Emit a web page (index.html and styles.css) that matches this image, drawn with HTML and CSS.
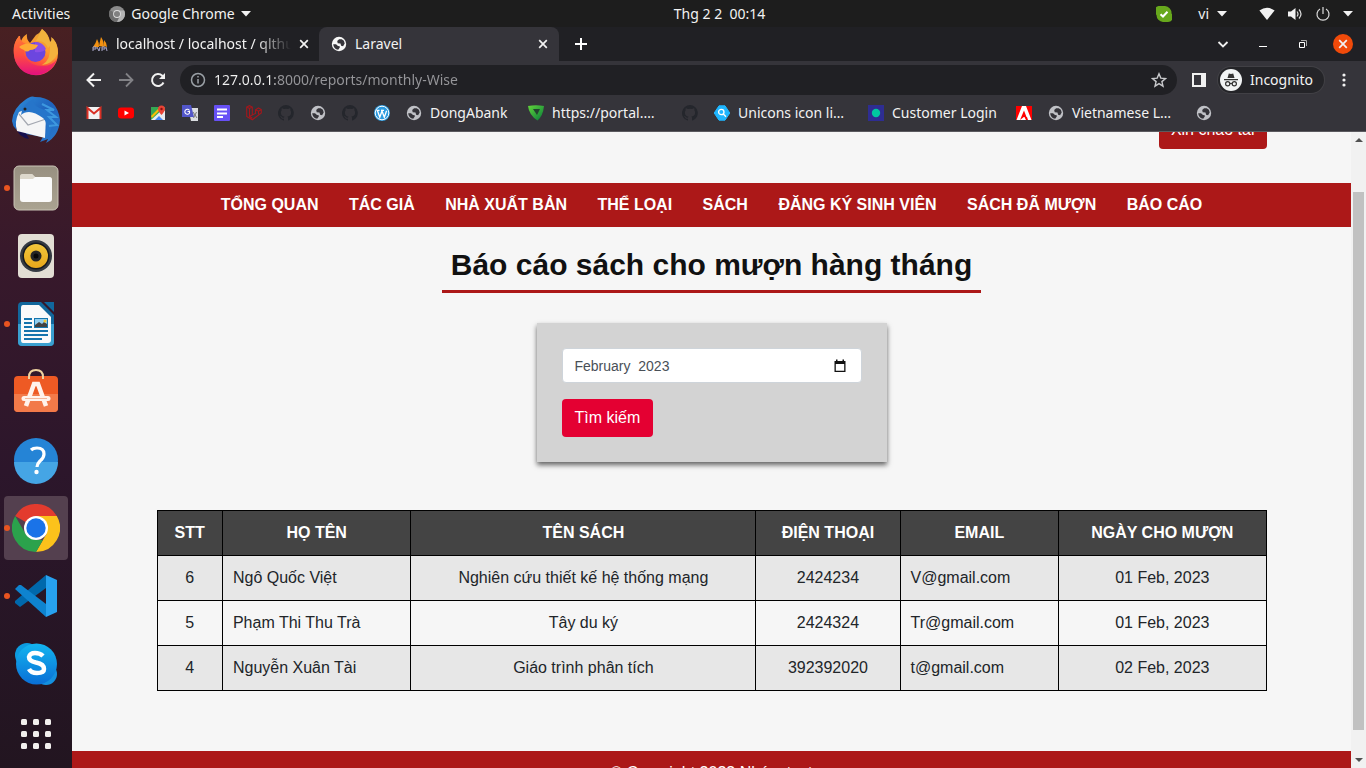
FILE: index.html
```html
<!DOCTYPE html>
<html lang="vi">
<head>
<meta charset="utf-8">
<title>Laravel</title>
<meta name="viewport" content="width=device-width, initial-scale=1">
<link rel="stylesheet" href="styles.css">
</head>
<body>
<svg class="defs" aria-hidden="true">
  <defs>
    <linearGradient id="fx" x1="0.8" y1="0" x2="0.3" y2="1"><stop offset="0" stop-color="#d9a83a"/><stop offset=".4" stop-color="#ff9a2e"/><stop offset=".7" stop-color="#ff4f3c"/><stop offset="1" stop-color="#e5137c"/></linearGradient>
    <linearGradient id="fxr" x1="0" y1="0" x2="0" y2="1"><stop offset="0" stop-color="#ff7a34"/><stop offset=".5" stop-color="#ff4b42"/><stop offset="1" stop-color="#e3107f"/></linearGradient>
    <linearGradient id="tb" x1="0" y1="0" x2="1" y2="1"><stop offset="0" stop-color="#2f8fdc"/><stop offset=".5" stop-color="#1f63bd"/><stop offset="1" stop-color="#2b7ccf"/></linearGradient>
    <linearGradient id="files" x1="0" y1="0" x2="0" y2="1"><stop offset="0" stop-color="#989081"/><stop offset="1" stop-color="#aaa391"/></linearGradient>
    <linearGradient id="cone" x1="0" y1="0" x2="0" y2="1"><stop offset="0" stop-color="#f0c63c"/><stop offset="1" stop-color="#e8a81b"/></linearGradient>
    <linearGradient id="skype" x1="0" y1="0" x2="0" y2="1"><stop offset="0" stop-color="#13b5ef"/><stop offset="1" stop-color="#0a6fd6"/></linearGradient>
    <linearGradient id="portal" x1="0" y1="0" x2="1" y2="1"><stop offset="0" stop-color="#63d63b"/><stop offset="1" stop-color="#067a3a"/></linearGradient>
  </defs>
  <symbol id="globe" viewBox="0 0 16 16"><circle cx="8" cy="8" r="7.2" fill="currentColor"/><path class="land" d="M2.2 8.2 5 8.3l2 1.8 1.7.2.1 1.2-1.6 2.2c-2.9-.4-4.9-2.6-5-5.5zM6.2 5l1.9-1.8h2.6l2.2 1.6.8 2.8-1.6 2.6-2-.5-.6-2.1-2.8-.3z"/></symbol>
  <symbol id="github" viewBox="0 0 16 16"><path fill="currentColor" d="M8 0a8 8 0 0 0-2.5 15.600c.4.1.5-.2.5-.4v-1.500c-2.200.5-2.700-1-2.700-1-.4-.9-.9-1.200-.9-1.200-.7-.5.1-.5.1-.5.8.1 1.200.8 1.200.8.7 1.300 1.900.9 2.300.7.1-.5.3-.9.5-1.100-1.800-.2-3.600-.9-3.600-4 0-.9.3-1.600.8-2.100-.1-.2-.4-1 .1-2.100 0 0 .7-.2 2.200.8a7.500 7.500 0 0 1 4 0c1.500-1 2.200-.8 2.200-.8.4 1.100.2 1.900.1 2.100.5.6.8 1.300.8 2.100 0 3.100-1.900 3.700-3.700 3.900.3.300.6.8.6 1.500v2.300c0 .2.100.5.600.4A8 8 0 0 0 8 0z"/></symbol>
  <symbol id="cross" viewBox="0 0 10 10"><path d="M1.200 1.200l7.600 7.600M8.800 1.200 1.200 8.800" stroke="currentColor" stroke-width="1.700"/></symbol>
  <symbol id="caret" viewBox="0 0 10 6"><path d="M0 0h10L5 5.500z" fill="currentColor"/></symbol>
</svg>

<header class="topbar">
  <div class="topbar-side">
    <button class="top-btn">Activities</button>
    <button class="top-btn top-app">
      <svg class="i16" viewBox="0 0 16 16"><circle cx="8" cy="8" r="8" fill="#8b8b8b"/><path d="M8 8 1 4.200A8 8 0 0 0 8 16l3-6z" fill="#6e6e6e"/><path d="M8 4.500h7.200A8 8 0 0 1 8 16l3.200-6.500z" fill="#b4b4b4"/><circle cx="8" cy="8" r="3.900" fill="#ddd"/><circle cx="8" cy="8" r="3" fill="#808080"/></svg>
      <span>Google Chrome</span>
      <svg class="caret"><use href="#caret"/></svg>
    </button>
  </div>
  <button class="top-btn clock">Thg 2 2&nbsp; 00:14</button>
  <div class="topbar-side topbar-end">
    <svg class="i16 skype-ok" viewBox="0 0 16 16"><path d="M4 0h5a7 7 0 0 1 6.500 7.500A5 5 0 0 1 12 16H7A7 7 0 0 1 .5 9 5 5 0 0 1 4 0z" fill="#67a81c"/><path d="M4.500 8.200 7 10.500l4.500-4.700" fill="none" stroke="#fff" stroke-width="2"/></svg>
    <button class="top-btn lang"><span>vi</span><svg class="caret"><use href="#caret"/></svg></button>
    <button class="top-btn tray" aria-label="Hệ thống">
      <svg class="i16" viewBox="0 0 16 16"><path d="M.4 4.600Q8-1.200 15.600 4.600L8 14z" fill="#f2f2f2"/></svg>
      <svg class="i16" viewBox="0 0 16 16"><path d="M1 5.500h3L8.500 2v12L4 10.500H1z" fill="#f2f2f2"/><path d="M10 5.500q2 2.500 0 5M12 3.500q4 4.500 0 9" fill="none" stroke="#ddd" stroke-width="1.200"/></svg>
      <svg class="i16" viewBox="0 0 16 16"><path d="M5 3a6 6 0 1 0 6 0M8 1v7" fill="none" stroke="#ddd" stroke-width="1.200"/></svg>
      <svg class="caret"><use href="#caret"/></svg>
    </button>
  </div>
</header>

<div class="desktop">
  <nav class="dock" aria-label="Dock">
    <button class="tile" aria-label="Firefox"><svg class="i48" viewBox="0 0 48 48"><path d="M24 7q4-2 6-6 7 5 8 13 3-1 2-4 7 7 6 15.500A22 22 0 0 1 2 25Q1 15 7 8q0 4 2 5 2-5 6-7-1 5 3 9z" fill="url(#fx)"/><path d="M7 8q-7 9-5 19a22 22 0 0 0 43 4q-5 7-14 7-13 0-18-9-3-8 1-13-6-2-6-8z" fill="url(#fxr)"/><circle cx="23.500" cy="24" r="10" fill="#6c46df"/><path d="M23 14q8 0 11 7-4 4-11 3z" fill="#8a4fe8"/><path d="M7 19q6-5 13-3l6 1q-2 5-8 5-3 3-6 0-3-1-5-3z" fill="#ffab34"/><path d="M24 13q9-1 12 7l2-2q1 14-8 19 11-1 16-12-1-13-7-16 1 4-1 5-2-8-8-13-3 6-6 12z" fill="#f2b23d"/></svg></button>
    <button class="tile" aria-label="Thunderbird"><svg class="i48" viewBox="0 0 48 48"><path d="M13 4q6-5 10-3 22 0 25 23-1 16-14 23l2-4-8 3 3-5-17-3Q1 35 0 25 1 12 13 4z" fill="url(#tb)"/><path d="M4 31q2 10 13 12l-3-6z" fill="#17104f"/><path d="M7 16 17 12l17 9-1 21L5 35q-3-9 2-19z" fill="#f5f5f6"/><path d="m7 18 9 11 18-6" fill="none" stroke="#a4a8b1" stroke-width="1.200"/><path d="M9 19q1-11 13-16-3 7 11 11 11 5 7 17-2 9-7 12 4-16-2-21-8-6-14-6-5 0-8 3z" fill="#2675ca"/><path d="m30 8 12 6-7 0 9 7-7 0 8 8-8 1" fill="none" stroke="#3d98df" stroke-width="2"/><circle cx="13" cy="13" r="1.500" fill="#222"/></svg></button>
    <button class="tile running" aria-label="Tệp tin"><svg class="i48" viewBox="0 0 48 48"><rect x="2" y="2" width="44" height="44" rx="5" fill="url(#files)" stroke="#c9c3b5"/><path d="M8 13q0-3 3-3h9l3 3h14q3 0 3 3v10H8z" fill="#ddd8cc"/><rect x="8" y="13" width="32" height="25" rx="3" fill="#fafafa"/><path d="M8 15v-2q0-3 3-3h9l3 3-2 2z" fill="#ddd8cc"/></svg></button>
    <button class="tile" aria-label="Rhythmbox"><svg class="i48" viewBox="0 0 48 48"><rect x="6" y="2" width="36" height="44" rx="4" fill="#e2ded4"/><circle cx="24" cy="24" r="16" fill="#343a42"/><circle cx="24" cy="24" r="13.500" fill="#15191e"/><circle cx="24" cy="24" r="12" fill="url(#cone)"/><circle cx="24" cy="24" r="5.500" fill="#262626"/><circle cx="24" cy="24" r="2.500" fill="#080808"/></svg></button>
    <button class="tile running" aria-label="LibreOffice Writer"><svg class="i48" viewBox="0 0 48 48"><path d="M10 2h19l13 13v27q0 4-4 4H10q-4 0-4-4V6q0-4 4-4z" fill="#12679c"/><path d="M6 24h36v18q0 4-4 4H10q-4 0-4-4z" fill="#3aa0d0"/><path d="M32 2h10v10z" fill="#11679e"/><path d="M11 5h16l12 12v23q0 3-3 3H11q-2 0-2-3V8q0-3 2-3z" fill="#fafafa"/><path d="M12 19h8M12 23h8M12 27h8M12 31h24M12 35h24M12 39h18" stroke="#1674ad" stroke-width="2"/><rect x="22" y="18" width="14" height="10" fill="#1576ae"/><path d="M23 19h12v8H23z" fill="#92cff0"/><path d="m23 25 4-3 3 2 2-2 3 2v3H23z" fill="#424242"/><circle cx="33" cy="21" r="1.500" fill="#f3c62f"/></svg></button>
    <button class="tile" aria-label="Ubuntu Software"><svg class="i48" viewBox="0 0 48 48"><rect x="2" y="8" width="44" height="36" rx="4" fill="#ee5a24"/><path d="M2 26h44v14q0 4-4 4H6q-4 0-4-4z" fill="#f27a49"/><path d="M17 11V9q0-7 7-7t7 7v2" fill="none" stroke="#efd3a0" stroke-width="2"/><path d="m14 38 8-22h4l8 22" fill="none" stroke="#fff3ec" stroke-width="4.500"/><path d="M12 30.500h24" stroke="#fff3ec" stroke-width="5" stroke-linecap="round"/><path d="M13 30.500h22" stroke="#f3b79b"/></svg></button>
    <button class="tile" aria-label="Trợ giúp"><svg class="i48" viewBox="0 0 48 48"><circle cx="24" cy="24" r="22" fill="#2584d6"/><path d="M2 26h44a22 22 0 0 1-44 0z" fill="#45a5e5"/><path d="M19 14q2-2 6-2 7 0 7 6 0 4-4 7-3 3-3 6" fill="none" stroke="#fff" stroke-width="3.200"/><circle cx="24.500" cy="36" r="2.200" fill="#fff"/></svg></button>
    <button class="tile running active" aria-label="Google Chrome"><svg class="i48" viewBox="0 0 48 48"><path d="M24 24 3.200 12A24 24 0 0 1 44.800 12z" fill="#e33b2e"/><path d="M24 12h20.800A24 24 0 0 1 24 48l10.400-18z" fill="#fcc21b"/><path d="M3.200 12 13.600 30 24 36h6.900L24 48A24 24 0 0 1 3.200 12z" fill="#2ba24c"/><circle cx="24" cy="24" r="12" fill="#fff"/><circle cx="24" cy="24" r="9.700" fill="#1a73e8"/></svg></button>
    <button class="tile running" aria-label="Visual Studio Code"><svg class="i48" viewBox="0 0 48 48"><path d="M34 3v13L8 35l-5-4v-2z" fill="#0068ac"/><path d="m3 17 4-4h2l25 19v13z" fill="#0e83cf"/><path d="m34 3 11 5v32l-11 5z" fill="#27a1ef"/></svg></button>
    <button class="tile" aria-label="Skype"><svg class="i48" viewBox="0 0 48 48"><circle cx="15" cy="15" r="12" fill="#0c9be0"/><circle cx="34" cy="34" r="11" fill="#1490df"/><circle cx="24.500" cy="24" r="20.500" fill="url(#skype)"/><path d="M31 16q-3-3-8-3t-6 4q0 4 7 5.500 8 1.500 8 6.500 0 4-7 4-6 0-8-4" fill="none" stroke="#fff" stroke-width="4.500"/></svg></button>
    <button class="tile apps" aria-label="Ứng dụng"><svg class="i48" viewBox="0 0 48 48" fill="#f2f0ee"><rect x="9" y="9" width="6" height="6" rx="1.500"/><rect x="21" y="9" width="6" height="6" rx="1.500"/><rect x="33" y="9" width="6" height="6" rx="1.500"/><rect x="9" y="21" width="6" height="6" rx="1.500"/><rect x="21" y="21" width="6" height="6" rx="1.500"/><rect x="33" y="21" width="6" height="6" rx="1.500"/><rect x="9" y="33" width="6" height="6" rx="1.500"/><rect x="21" y="33" width="6" height="6" rx="1.500"/><rect x="33" y="33" width="6" height="6" rx="1.500"/></svg></button>
  </nav>

  <div class="browser">
    <div class="tabstrip">
      <div class="tab">
        <svg class="i16" viewBox="0 0 16 16"><path d="M1 11Q4 7 5 3q2 3 2 8zM7 10q1-5 2-9 3 4 3 10zM12 10V4q3 3 3 7z" fill="#f29111"/><path d="M1 15v-4h3v2H1m4-2 2 4 1-4m2 4v-4h3v2h-3m4-2 1 4" fill="none" stroke="#a9a6c9"/></svg>
        <span class="tab-title faded">localhost / localhost / qlthuvien</span>
        <button class="tab-close" aria-label="Đóng"><svg class="i10"><use href="#cross"/></svg></button>
      </div>
      <div class="tab tab-active">
        <svg class="i16 globe-light"><use href="#globe"/></svg>
        <span class="tab-title">Laravel</span>
        <button class="tab-close" aria-label="Đóng"><svg class="i10"><use href="#cross"/></svg></button>
      </div>
      <button class="new-tab" aria-label="Thẻ mới"><svg class="i12" viewBox="0 0 12 12"><path d="M6 0v12M0 6h12" stroke="#fff" stroke-width="2"/></svg></button>
      <div class="win-controls">
        <button aria-label="Tìm thẻ"><svg class="i12" viewBox="0 0 12 12"><path d="m1.500 4 4.500 4.500L10.500 4" fill="none" stroke="#eee" stroke-width="1.800"/></svg></button>
        <button aria-label="Thu nhỏ"><svg class="i12" viewBox="0 0 12 12"><path d="M2 8.500h8" stroke="#fff"/></svg></button>
        <button aria-label="Khôi phục"><svg class="i12" viewBox="0 0 12 12"><path d="M2.500 4.500h5v5h-5z" fill="none" stroke="#fff"/><path d="M4 2.500h5.500V8" fill="none" stroke="#aaa"/></svg></button>
        <button class="win-close" aria-label="Đóng cửa sổ"><svg class="i10"><use href="#cross"/></svg></button>
      </div>
    </div>

    <div class="toolbar">
      <button class="tool" aria-label="Quay lại"><svg class="i16" viewBox="0 0 16 16"><path d="M15 8H2M8 1.500 1.500 8 8 14.500" fill="none" stroke="#f1f1f1" stroke-width="2"/></svg></button>
      <button class="tool" aria-label="Tiến"><svg class="i16" viewBox="0 0 16 16"><path d="M1 8h13M8 1.500 14.500 8 8 14.500" fill="none" stroke="#828286" stroke-width="1.800"/></svg></button>
      <button class="tool" aria-label="Tải lại"><svg class="i16" viewBox="0 0 16 16"><path d="M13.500 10.500A6 6 0 1 1 12.300 3.800L14 5.500" fill="none" stroke="#f1f1f1" stroke-width="2"/><path d="M15 1v6H9z" fill="#f1f1f1"/></svg></button>
      <div class="omnibox">
        <svg class="i16" viewBox="0 0 16 16" fill="none" stroke="#9aa0a6" stroke-width="1.500"><circle cx="8" cy="8" r="6.500"/><path d="M8 7v4.500M8 4v1.600"/></svg>
        <input class="url" type="text" aria-label="Địa chỉ" value="127.0.0.1:8000/reports/monthly-Wise">
        <button aria-label="Dấu trang"><svg class="i16" viewBox="0 0 16 16"><path d="m8 1.800 1.800 4.300 4.700.4-3.600 3.100 1.100 4.600L8 11.700l-4 2.500 1.100-4.600L1.500 6.500l4.700-.4z" fill="none" stroke="#c9cacd" stroke-width="1.400"/></svg></button>
      </div>
      <button class="panel" aria-label="Bảng bên"><svg class="i16" viewBox="0 0 16 16"><path fill-rule="evenodd" d="M1 1h14v14H1zM3 3v10h7V3z" fill="#f1f1f1"/></svg></button>
      <button class="incognito">
        <svg class="i22" viewBox="0 0 22 22"><circle cx="11" cy="11" r="11" fill="#f1f3f4"/><path d="m7.500 9 1.300-4.500 2.200.5 2.200-.5L14.500 9zM4 10h14v1.300H4z" fill="#333"/><g fill="none" stroke="#333" stroke-width="1.200"><circle cx="7.700" cy="14.800" r="2.100"/><circle cx="14.300" cy="14.800" r="2.100"/><path d="M9.800 14.500h2.400"/></g></svg>
        <span>Incognito</span>
      </button>
      <button class="menu" aria-label="Menu"><svg class="i16" viewBox="0 0 16 16" fill="#f1f1f1"><circle cx="8" cy="3" r="1.600"/><circle cx="8" cy="8" r="1.600"/><circle cx="8" cy="13" r="1.600"/></svg></button>
    </div>

    <nav class="bookmarks" aria-label="Dấu trang">
      <a href="#" aria-label="Gmail"><svg class="i16" viewBox="0 0 16 16"><path d="M1 2h14v12H1z" fill="#f2f2f2"/><path d="M1.500 14V3L8 8.500 14.500 3v11" fill="none" stroke="#d93025" stroke-width="2"/></svg></a>
      <a href="#" aria-label="YouTube"><svg class="i16" viewBox="0 0 16 16"><rect y="2.500" width="16" height="11" rx="3" fill="#f00"/><path d="m6.500 5.500 4.500 2.500-4.500 2.500z" fill="#fff"/></svg></a>
      <a href="#" aria-label="Maps"><svg class="i16" viewBox="0 0 16 16"><path d="M1 2h14v13H1z" fill="#34a853"/><path d="M1 15 13 4l2 2v9z" fill="#e8eaed"/><path d="M1 11 10 2h3L2 13z" fill="#fbbc04"/><path d="m5 15 4-4 4 4z" fill="#4285f4"/><path d="M11.500 10Q8 6 8 4a3.500 3.500 0 0 1 7 0q0 2-3.500 6z" fill="#ea4335"/><circle cx="11.500" cy="4" r="1.200" fill="#811"/></svg></a>
      <a href="#" aria-label="Translate"><svg class="i16" viewBox="0 0 16 16"><path d="M6 3h10v13H9z" fill="#dadce0"/><path d="M0 0h9l3 12H0z" fill="#5256c9"/><path d="M7.500 5.500A2.500 2.500 0 1 0 7.500 8V6.500H5.500" fill="none" stroke="#fff" stroke-width="1.100"/><path d="m11 7 4 6m-.5-6-3 6" stroke="#777"/></svg></a>
      <a href="#" aria-label="Forms"><svg class="i16" viewBox="0 0 16 16"><rect width="16" height="16" rx="1" fill="#6750f5"/><path d="M3 4.500h10M3 8.500h10M3 12h6" stroke="#fff" stroke-width="2"/></svg></a>
      <a href="#" aria-label="Laravel"><svg class="i16" viewBox="0 0 16 16"><path d="m.7 2 2.800-1.300L6.300 2v8l3.200-1.500V4.700L12.500 3l2.800 1.500V8L6.300 14.800.7 11.500zm0 0 2.800 1.500L6.300 2M3.500 3.500v8l2.800-1.500M9.500 4.700l3 1.500 2.800-1.500M12.500 6.200v3M3.500 11.500l2.800 1.700" fill="none" stroke="#a3171c" stroke-width="1.100"/></svg></a>
      <a href="#" aria-label="GitHub"><svg class="i16 dark"><use href="#github"/></svg></a>
      <a href="#" aria-label="Web"><svg class="i16 globe-grey"><use href="#globe"/></svg></a>
      <a href="#" aria-label="GitHub"><svg class="i16 dark"><use href="#github"/></svg></a>
      <a href="#" aria-label="WordPress"><svg class="i16" viewBox="0 0 16 16"><circle cx="8" cy="8" r="8" fill="#2b9be0"/><circle cx="8" cy="8" r="6.800" fill="none" stroke="#fff" stroke-width="1"/><path d="m3.300 5.300 2.500 7L8 6l2.300 6.300 2.300-6.500M2.500 5.300h3M7 5.300h3" fill="none" stroke="#fff" stroke-width="1.300"/></svg></a>
      <a href="#"><svg class="i16 globe-grey"><use href="#globe"/></svg><span class="mark mark-s">DongAbank</span></a>
      <a href="#"><svg class="i16" viewBox="0 0 16 16"><path d="M0 1q8-1.500 16 0-1 10-6.500 14.500Q1 10 0 1z" fill="url(#portal)"/><path d="M5 4h7L9 10z" fill="#23442f"/></svg><span class="mark mark-l">https://portal.…</span></a>
      <a href="#" aria-label="GitHub"><svg class="i16 dark"><use href="#github"/></svg></a>
      <a href="#"><svg class="i16" viewBox="0 0 16 16"><path d="M5 .8h6l4.800 7.200L11 15.200H5L.2 8z" fill="#1fb6ff" stroke="#1fb6ff" stroke-linejoin="round"/><circle cx="7.300" cy="7" r="2.700" fill="none" stroke="#fff" stroke-width="1.300"/><path d="m9.300 9 2.700 2.700" stroke="#fff" stroke-width="1.300"/></svg><span class="mark mark-l">Unicons icon li…</span></a>
      <a href="#"><svg class="i16" viewBox="0 0 16 16"><path d="M0 0h16v16H0z" fill="#2e2d92"/><circle cx="8" cy="8" r="4.200" fill="#00c8a0"/></svg><span class="mark mark-m">Customer Login</span></a>
      <a href="#" aria-label="Adobe"><svg class="i16" viewBox="0 0 16 16"><path d="M0 1h16v14H0z" fill="#f00"/><path d="M6 1h4l5.500 14H12l-1-3H8.500L10 15H.5z" fill="#fff"/><path d="m8 5.500 2.500 6.500H7.800L4 15z" fill="#f00"/></svg></a>
      <a href="#"><svg class="i16 globe-grey"><use href="#globe"/></svg><span class="mark mark-m">Vietnamese L…</span></a>
      <a href="#" aria-label="Web"><svg class="i16 globe-grey"><use href="#globe"/></svg></a>
    </nav>

    <div class="viewport">
      <div class="page">
        <div class="page-head container"><button class="btn btn-user">Xin chào tài</button></div>
        <nav class="site-nav">
          <a href="#">TỔNG QUAN</a>
          <a href="#">TÁC GIẢ</a>
          <a href="#">NHÀ XUẤT BẢN</a>
          <a href="#">THỂ LOẠI</a>
          <a href="#">SÁCH</a>
          <a href="#">ĐĂNG KÝ SINH VIÊN</a>
          <a href="#">SÁCH ĐÃ MƯỢN</a>
          <a href="#">BÁO CÁO</a>
        </nav>
        <main class="container content">
          <h1 class="title">Báo cáo sách cho mượn hàng tháng</h1>
          <form class="search">
            <div class="month">
              <input type="text" value="February  2023" aria-label="Tháng">
              <button type="button" aria-label="Chọn tháng"><svg class="i16" viewBox="0 0 16 16"><path fill-rule="evenodd" d="M2.500 3H4V1.500h1.500V3h5V1.500H12V3h1.500v11h-11zM3.800 6v6.700h8.400V6z" fill="#111"/></svg></button>
            </div>
            <button class="btn btn-search" type="button">Tìm kiếm</button>
          </form>
          <table class="loans">
            <colgroup><col class="c-no"><col class="c-name"><col class="c-book"><col class="c-phone"><col class="c-mail"><col class="c-date"></colgroup>
            <thead><tr><th>STT</th><th>HỌ TÊN</th><th>TÊN SÁCH</th><th>ĐIỆN THOẠI</th><th>EMAIL</th><th>NGÀY CHO MƯỢN</th></tr></thead>
            <tbody>
              <tr><td>6</td><td class="left">Ngô Quốc Việt</td><td>Nghiên cứu thiết kế hệ thống mạng</td><td>2424234</td><td class="left">V@gmail.com</td><td>01 Feb, 2023</td></tr>
              <tr><td>5</td><td class="left">Phạm Thi Thu Trà</td><td>Tây du ký</td><td>2424324</td><td class="left">Tr@gmail.com</td><td>01 Feb, 2023</td></tr>
              <tr><td>4</td><td class="left">Nguyễn Xuân Tài</td><td>Giáo trình phân tích</td><td>392392020</td><td class="left">t@gmail.com</td><td>02 Feb, 2023</td></tr>
            </tbody>
          </table>
        </main>
        <footer class="footer">© Copyright 2023 Nhóm test</footer>
      </div>
      <div class="scrollbar" aria-hidden="true">
        <svg class="arrow" viewBox="0 0 8 4"><path d="M4 0l4 4H0z" fill="#505050"/></svg>
        <div class="track"><div class="thumb"></div></div>
        <svg class="arrow" viewBox="0 0 8 4"><path d="M0 0h8L4 4z" fill="#505050"/></svg>
      </div>
    </div>
  </div>
</div>
</body>
</html>
```
FILE: styles.css
```css
* { box-sizing: border-box; }

body {
  margin: 0;
  height: 100vh;
  display: flex;
  flex-direction: column;
  overflow: hidden;
  font: 14px/20px "Noto Sans", sans-serif;
  color: #f2f2f2;
  background: #1d1d1d;
}

button {
  margin: 0;
  padding: 0;
  border: 0;
  background: none;
  color: inherit;
  font: inherit;
  display: flex;
  align-items: center;
}

a { color: inherit; text-decoration: none; }
svg { display: block; flex: none; }
.defs { position: absolute; width: 0; height: 0; }
.i10 { width: 10px; height: 10px; }
.i12 { width: 12px; height: 12px; }
.i16 { width: 16px; height: 16px; }
.i22 { width: 22px; height: 22px; }
.i48 { width: 48px; height: 48px; }
.caret { width: 10px; height: 6px; }

/* System bar */
.topbar {
  flex: none;
  height: 27px;
  display: flex;
  align-items: center;
  justify-content: space-between;
  padding: 0 13px 0 12px;
}
.topbar-side { flex: 1; display: flex; align-items: center; }
.topbar-end { justify-content: flex-end; }
.top-app { gap: 6px; margin-left: 39px; }
.clock { padding-left: 74px; }
.skype-ok { margin-right: 26px; }
.lang { gap: 8px; margin-right: 32px; }
.tray { gap: 12px; }

.desktop { flex: 1; min-height: 0; display: flex; }

/* Dock */
.dock {
  flex: none;
  width: 72px;
  display: flex;
  flex-direction: column;
  justify-content: flex-end;
  align-items: center;
  gap: 4px;
  padding-bottom: 2px;
  overflow: hidden;
  background: linear-gradient(#482022, #38192b 30%, #2c162b 60%, #221520);
}
.tile {
  position: relative;
  flex: none;
  width: 64px;
  height: 64px;
  justify-content: center;
  border-radius: 4px;
}
.tile.active { background: #54404f; }
.tile.running::before {
  content: "";
  position: absolute;
  left: 0;
  width: 6px;
  height: 6px;
  border-radius: 50%;
  background: #e95420;
}
.apps { margin-top: 2px; }

/* Browser frame */
.browser { flex: 1; min-width: 0; display: flex; flex-direction: column; background: #35343a; }
.tabstrip { flex: none; height: 34px; display: flex; background: #202024; }
.tab {
  width: 247px;
  display: flex;
  align-items: center;
  gap: 8px;
  padding: 0 10px 0 20px;
}
.tab-active { width: 240px; padding: 0 11px 0 12px; border-radius: 8px 8px 0 0; background: #35343a; }
.tab-title { flex: 1; min-width: 0; overflow: hidden; white-space: nowrap; }
.faded { -webkit-mask-image: linear-gradient(90deg, #000 80%, transparent); mask-image: linear-gradient(90deg, #000 80%, transparent); }
.new-tab { padding: 0 16px; }
.win-controls { margin-left: auto; display: flex; align-items: center; gap: 20px; padding-right: 13px; }
.win-controls button { width: 20px; height: 20px; justify-content: center; }
.win-close { border-radius: 50%; background: #f04a0a; }
.globe-light { color: #f8f8f8; fill: #35343a; }
.globe-grey { color: #c0c1c6; fill: #35343a; }
.dark { color: #24262c; }

.toolbar { flex: none; height: 38px; display: flex; align-items: center; padding: 0 14px; }
.tool { margin-right: 16px; }
.omnibox {
  flex: 1;
  min-width: 0;
  height: 30px;
  display: flex;
  align-items: center;
  gap: 8px;
  padding: 0 10px;
  margin-left: -2px;
  border-radius: 15px;
  background: #202024;
}
.url {
  flex: 1;
  min-width: 0;
  border: 0;
  padding: 0;
  outline: 0;
  font: inherit;
  color: transparent;
  background: linear-gradient(90deg, #f2f2f2 61px, #96969a 61px);
  -webkit-background-clip: text;
  background-clip: text;
}
.panel { margin: 0 11px 0 14px; }
.incognito { height: 26px; gap: 8px; padding: 0 11px 0 2px; border-radius: 13px; background: #242428; box-shadow: 0 0 0 1px #414045; }
.menu { margin-left: 12px; }

.bookmarks {
  flex: none;
  height: 33px;
  display: flex;
  align-items: center;
  gap: 16px;
  padding: 0 14px 4px;
  border-bottom: 1px solid #5b5a5f;
}
.bookmarks a { display: flex; align-items: center; gap: 8px; }
.mark { white-space: nowrap; }
.mark-s { width: 82px; }
.mark-m { width: 108px; }
.mark-l { width: 114px; }

/* Web page */
.viewport { flex: 1; min-height: 0; display: flex; overflow: hidden; background: #f6f6f6; }
.page {
  flex: 1;
  min-width: 0;
  height: max-content;
  margin-top: -21px;
  font: 16px/24px "Liberation Sans", Arial, sans-serif;
  color: #212529;
}
.container { max-width: 1110px; margin: 0 auto; }
.page-head { display: flex; justify-content: flex-end; padding-bottom: 34px; }
.btn { height: 38px; padding: 0 12px; border-radius: 4px; color: #fff; }
.btn-user { background: #ac1818; }
.btn-search { padding: 0 13px; background: #e40032; }

.site-nav {
  padding: 10px 0;
  text-align: center;
  font-weight: 700;
  color: #fff;
  background: #ac1818;
}
.site-nav a { padding: 0 13px; }
.content { display: flex; flex-direction: column; align-items: center; padding: 20px 0 60px; }
.title {
  margin: 0 0 30px;
  padding: 0 9px 7px;
  border-bottom: 3px solid #ac1818;
  font-size: 30px;
  line-height: 36px;
  color: #111;
}
.search {
  width: 350px;
  padding: 25px;
  margin-bottom: 48px;
  background: #d3d3d3;
  box-shadow: 0 3px 5px rgba(0, 0, 0, .6);
}
.month {
  display: flex;
  align-items: center;
  height: 35px;
  margin-bottom: 16px;
  padding: 0 13px 0 12px;
  border: 1px solid #ced4da;
  border-radius: 4px;
  background: #fff;
}
.month input {
  flex: 1;
  min-width: 0;
  padding: 0;
  border: 0;
  outline: 0;
  background: none;
  color: #495057;
  font: 14px/20px "Liberation Sans", Arial, sans-serif;
}

.loans { width: 100%; table-layout: fixed; border-collapse: collapse; text-align: center; }
.loans th, .loans td { padding: 10px; border: 1px solid #000; }
.loans th { color: #fff; background: #444; white-space: nowrap; }
.loans tbody tr:nth-child(odd) { background: #e7e7e7; }
.loans .left { text-align: left; }
.c-no { width: 5.9%; }
.c-name { width: 17%; }
.c-book { width: 31.1%; }
.c-phone { width: 13%; }
.c-mail { width: 14.3%; }
.c-date { width: 18.7%; }

.footer { padding: 10px 0; text-align: center; color: #fff; background: #ac1818; }

.scrollbar { flex: none; width: 15px; display: flex; flex-direction: column; align-items: center; padding: 6px 0; background: #f1f1f1; }
.arrow { width: 8px; height: 4px; }
.track { flex: 1; width: 11px; padding: 50px 0 28px; display: flex; }
.thumb { flex: 1; background: #c1c1c1; }
```
